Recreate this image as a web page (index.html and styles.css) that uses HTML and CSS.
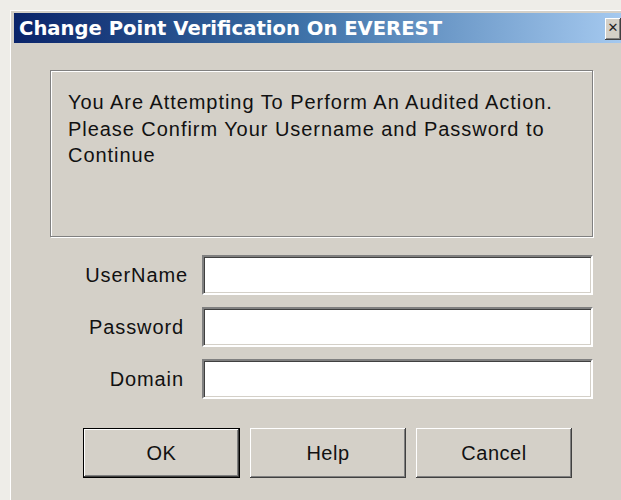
FILE: index.html
```html
<!DOCTYPE html>
<html lang="en">
<head>
<meta charset="utf-8">
<title>Change Point Verification On EVEREST</title>
<link rel="stylesheet" href="styles.css">
</head>
<body>
<div class="window">
  <div class="titlebar">
    <span class="title">Change Point Verification On EVEREST</span>
    <button class="close" type="button" aria-label="Close">&#x2715;</button>
  </div>
  <div class="content">
    <div class="groupbox">
      <p class="notice">You Are Attempting To Perform An Audited Action.<br>Please Confirm Your Username and Password to<br>Continue</p>
    </div>
    <form class="fields">
      <label class="label" for="user">UserName</label>
      <input class="field" id="user" type="text">
      <label class="label label-inset" for="pass">Password</label>
      <input class="field" id="pass" type="password">
      <label class="label label-inset" for="domain">Domain</label>
      <input class="field" id="domain" type="text">
    </form>
    <div class="buttons">
      <button class="btn btn-default" type="button">OK</button>
      <button class="btn" type="button">Help</button>
      <button class="btn" type="button">Cancel</button>
    </div>
  </div>
</div>
</body>
</html>
```

FILE: styles.css
```css
html, body {
  margin: 0;
  padding: 0;
}

body {
  width: 621px;
  height: 500px;
  overflow: hidden;
  background: #eeede8;
  font-family: "Liberation Sans", Arial, sans-serif;
  color: #000;
}

/* classic raised dialog frame */
.window {
  margin: 10px 0 0 10px;
  width: 615px;
  height: 490px;
  box-sizing: border-box;
  background: #d4d0c8;
  border-top: 1px solid #ffffff;
  border-left: 1px solid #ffffff;
  padding: 2px 0 0 3px;
  overflow: hidden;
}

.titlebar {
  height: 30px;
  display: flex;
  align-items: center;
  justify-content: space-between;
  padding: 0 4px 0 5px;
  background: linear-gradient(to right, #0a246a 0%, #3a6ea5 45%, #a6caf0 100%);
}

.title {
  color: #fff;
  font-family: "DejaVu Sans", Verdana, sans-serif;
  font-weight: bold;
  font-size: 19.6px;
  white-space: nowrap;
}

.close {
  width: 16px;
  height: 22px;
  margin: 2px 0 0 0;
  padding: 0 0 2px 0;
  background: #d4d0c8;
  border: 0;
  box-shadow: inset -1px -1px 0 #404040, inset 1px 1px 0 #ffffff, inset -2px -2px 0 #808080;
  font-size: 13px;
  font-weight: bold;
  line-height: 20px;
  color: #222;
  font-family: "DejaVu Sans", sans-serif;
}

.content {
  padding: 27px 0 0 36px;
}

/* etched frame around the notice */
.groupbox {
  width: 543px;
  height: 167px;
  box-sizing: border-box;
  border: 1px solid #808080;
  box-shadow: 1px 1px 0 #ffffff, inset 1px 1px 0 #ffffff;
  padding: 18px 0 0 17px;
}

.notice {
  margin: 0;
  font-size: 20px;
  line-height: 26.5px;
  letter-spacing: 0.95px;
  color: #111;
}

.fields {
  display: grid;
  grid-template-columns: 138px 391px;
  column-gap: 14px;
  row-gap: 12px;
  margin: 18px 0 0 0;
  align-items: center;
}

.label {
  text-align: right;
  font-size: 20px;
  letter-spacing: 0.9px;
  color: #111;
}

.label-inset {
  padding-right: 4px;
}

/* sunken edit box */
.field {
  height: 40px;
  box-sizing: border-box;
  margin: 0;
  background: #fff;
  border-style: solid;
  border-width: 2px;
  border-color: #808080 #ffffff #ffffff #808080;
  box-shadow: inset 1px 1px 0 #404040, inset -1px -1px 0 #d4d0c8;
  outline: none;
}

.buttons {
  display: flex;
  gap: 10px;
  margin: 29px 0 0 33px;
}

.btn {
  width: 156px;
  height: 50px;
  margin: 0;
  padding: 0;
  background: #d4d0c8;
  border: 0;
  box-shadow: inset -1px -1px 0 #404040, inset 1px 1px 0 #ffffff, inset -2px -2px 0 #808080;
  font-family: "Liberation Sans", Arial, sans-serif;
  font-size: 20px;
  letter-spacing: 0.5px;
  color: #111;
}

.btn-default {
  width: 157px;
  border: 1px solid #000;
}
```
